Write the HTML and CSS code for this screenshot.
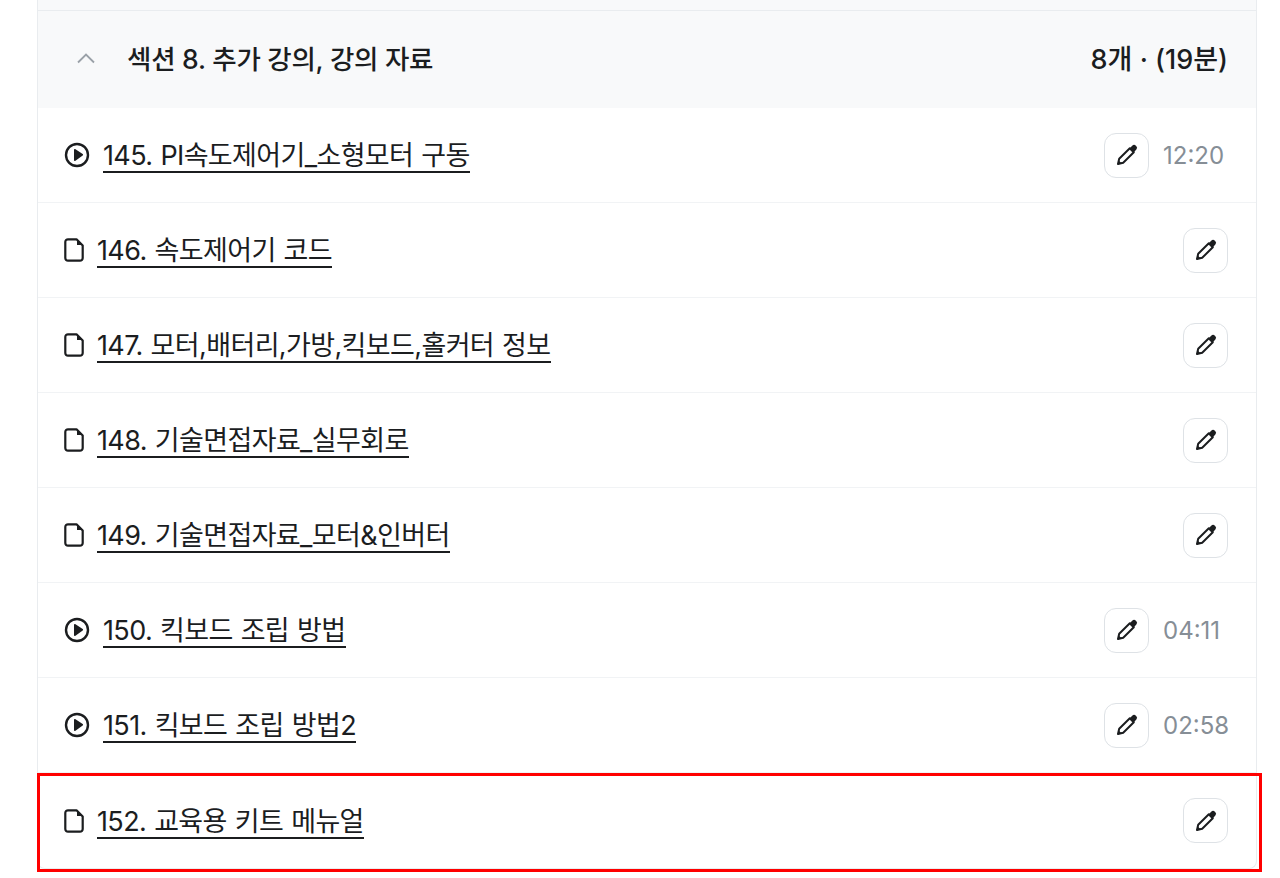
FILE: index.html
```html
<!DOCTYPE html>
<html lang="ko">
<head>
    <meta charset="UTF-8">
    <title>커리큘럼</title>
    <link rel="stylesheet" href="styles.css">
</head>
<body>
    <svg class="icon-defs" width="0" height="0">
        <symbol id="icon-play" viewBox="0 0 26 26">
            <circle cx="13" cy="13" r="11" fill="none" stroke="currentColor" stroke-width="2.4"/>
            <path d="M10 7.8c0-.6.6-1 1.100-.7l7.600 5c.5.3.5 1.100 0 1.400l-7.600 5.400c-.5.3-1.100 0-1.100-.7z" fill="currentColor"/>
        </symbol>
        <symbol id="icon-file" viewBox="0 0 20 24">
            <path d="M4 1.300h8.500l6.200 6.200V20a2.700 2.700 0 0 1-2.700 2.700H4A2.700 2.700 0 0 1 1.300 20V4A2.700 2.700 0 0 1 4 1.300z" fill="none" stroke="currentColor" stroke-width="2.200" stroke-linejoin="round"/>
            <path d="M13 1.300l5.700 5.700h-5.700z" fill="currentColor"/>
        </symbol>
        <symbol id="icon-pen" viewBox="0 0 24 24">
            <path d="M3 21l1.200-5.200L14.800 5.200l4 4L8.200 19.800z" fill="none" stroke="currentColor" stroke-width="2" stroke-linejoin="round"/>
            <path d="M14.300 5.700l2.900-2.900a2.600 2.600 0 0 1 3.700 0l.3.3a2.600 2.600 0 0 1 0 3.700l-2.900 2.900z" fill="currentColor"/>
            <path d="M2.500 21.500l1-4.300 3.300 3.300z" fill="currentColor"/>
        </symbol>
    </svg>

    <div class="curriculum">
        <div class="prev-section"></div>

        <div class="section-head">
            <svg class="chevron" width="20" height="12" viewBox="0 0 20 12"><path d="M2 10.500L10 2.500l8 8" fill="none" stroke="currentColor" stroke-width="1.800"/></svg>
            <span class="section-title">섹션 8. 추가 강의, 강의 자료</span>
            <span class="section-info">8개 · (19분)</span>
        </div>

        <div class="lesson">
            <svg class="icon-play"><use href="#icon-play"/></svg>
            <a class="lesson-title">145. PI속도제어기_소형모터 구동</a>
            <button class="note-btn"><svg><use href="#icon-pen"/></svg></button>
            <span class="time">12:20</span>
        </div>
        <div class="lesson">
            <svg class="icon-file"><use href="#icon-file"/></svg>
            <a class="lesson-title">146. 속도제어기 코드</a>
            <button class="note-btn"><svg><use href="#icon-pen"/></svg></button>
        </div>
        <div class="lesson">
            <svg class="icon-file"><use href="#icon-file"/></svg>
            <a class="lesson-title">147. 모터,배터리,가방,킥보드,홀커터 정보</a>
            <button class="note-btn"><svg><use href="#icon-pen"/></svg></button>
        </div>
        <div class="lesson">
            <svg class="icon-file"><use href="#icon-file"/></svg>
            <a class="lesson-title">148. 기술면접자료_실무회로</a>
            <button class="note-btn"><svg><use href="#icon-pen"/></svg></button>
        </div>
        <div class="lesson">
            <svg class="icon-file"><use href="#icon-file"/></svg>
            <a class="lesson-title">149. 기술면접자료_모터&amp;인버터</a>
            <button class="note-btn"><svg><use href="#icon-pen"/></svg></button>
        </div>
        <div class="lesson">
            <svg class="icon-play"><use href="#icon-play"/></svg>
            <a class="lesson-title">150. 킥보드 조립 방법</a>
            <button class="note-btn"><svg><use href="#icon-pen"/></svg></button>
            <span class="time">04:11</span>
        </div>
        <div class="lesson">
            <svg class="icon-play"><use href="#icon-play"/></svg>
            <a class="lesson-title">151. 킥보드 조립 방법2</a>
            <button class="note-btn"><svg><use href="#icon-pen"/></svg></button>
            <span class="time">02:58</span>
        </div>
        <div class="lesson lesson-last">
            <svg class="icon-file"><use href="#icon-file"/></svg>
            <a class="lesson-title">152. 교육용 키트 메뉴얼</a>
            <button class="note-btn"><svg><use href="#icon-pen"/></svg></button>
        </div>

        <!-- 빨간 강조 표시 -->
        <div class="highlight"></div>
    </div>
</body>
</html>
```

FILE: styles.css
```css
html,
body {
    margin: 0;
    height: 100%;
    overflow: hidden;
    background-color: #fff;
}

body {
    font-family: Inter, "Noto Sans CJK KR", sans-serif;
    color: #1b1d1f;
}

.icon-defs {
    position: absolute;
}

.curriculum {
    position: relative;
    box-sizing: border-box;
    width: 1220px;
    height: 869px;
    margin-left: 37px;
    border-left: 1px solid #e9ecef;
    border-right: 1px solid #e9ecef;
    border-bottom: 1px solid #e9ecef;
    border-radius: 0 0 8px 8px;
}

.prev-section {
    height: 10px;
    background-color: #f8f9fa;
    border-bottom: 1px solid #e9ecef;
}

.section-head {
    display: flex;
    align-items: center;
    box-sizing: border-box;
    height: 97px;
    padding: 0 28px 4px 38px;
    background-color: #f8f9fa;
}

.chevron {
    color: #9aa1a8;
    margin-right: 31px;
}

.section-title {
    flex: 1;
    font-size: 26.5px;
    font-weight: 500;
    letter-spacing: -0.25px;
}

.section-info {
    font-size: 27px;
    font-weight: 500;
}

.lesson {
    display: flex;
    align-items: center;
    box-sizing: border-box;
    height: 95px;
    padding: 0 28px 0 26px;
    border-bottom: 1px solid #f1f3f5;
}

.lesson-last {
    border-bottom: none;
}

.icon-play {
    width: 26px;
    height: 26px;
    margin-right: 13px;
}

.icon-file {
    width: 20px;
    height: 24px;
    margin-right: 13px;
}

.lesson-title {
    margin-right: auto;
    padding-top: 4px;
    font-size: 27px;
    line-height: 30px;
    letter-spacing: -0.62px;
    word-spacing: 1px;
    border-bottom: 2px solid #1b1d1f;
}

.note-btn {
    display: flex;
    align-items: center;
    justify-content: center;
    box-sizing: border-box;
    width: 45px;
    height: 45px;
    padding: 0;
    color: #1b1d1f;
    background-color: #fff;
    border: 1px solid #dee2e6;
    border-radius: 12px;
}

.note-btn svg {
    width: 24px;
    height: 24px;
}

.time {
    width: 65px;
    margin-left: 14px;
    font-size: 24px;
    color: #868e96;
}

.highlight {
    position: absolute;
    left: -1px;
    top: 773px;
    width: 1225px;
    height: 99px;
    box-sizing: border-box;
    border: 3px solid #ff0000;
}
```
